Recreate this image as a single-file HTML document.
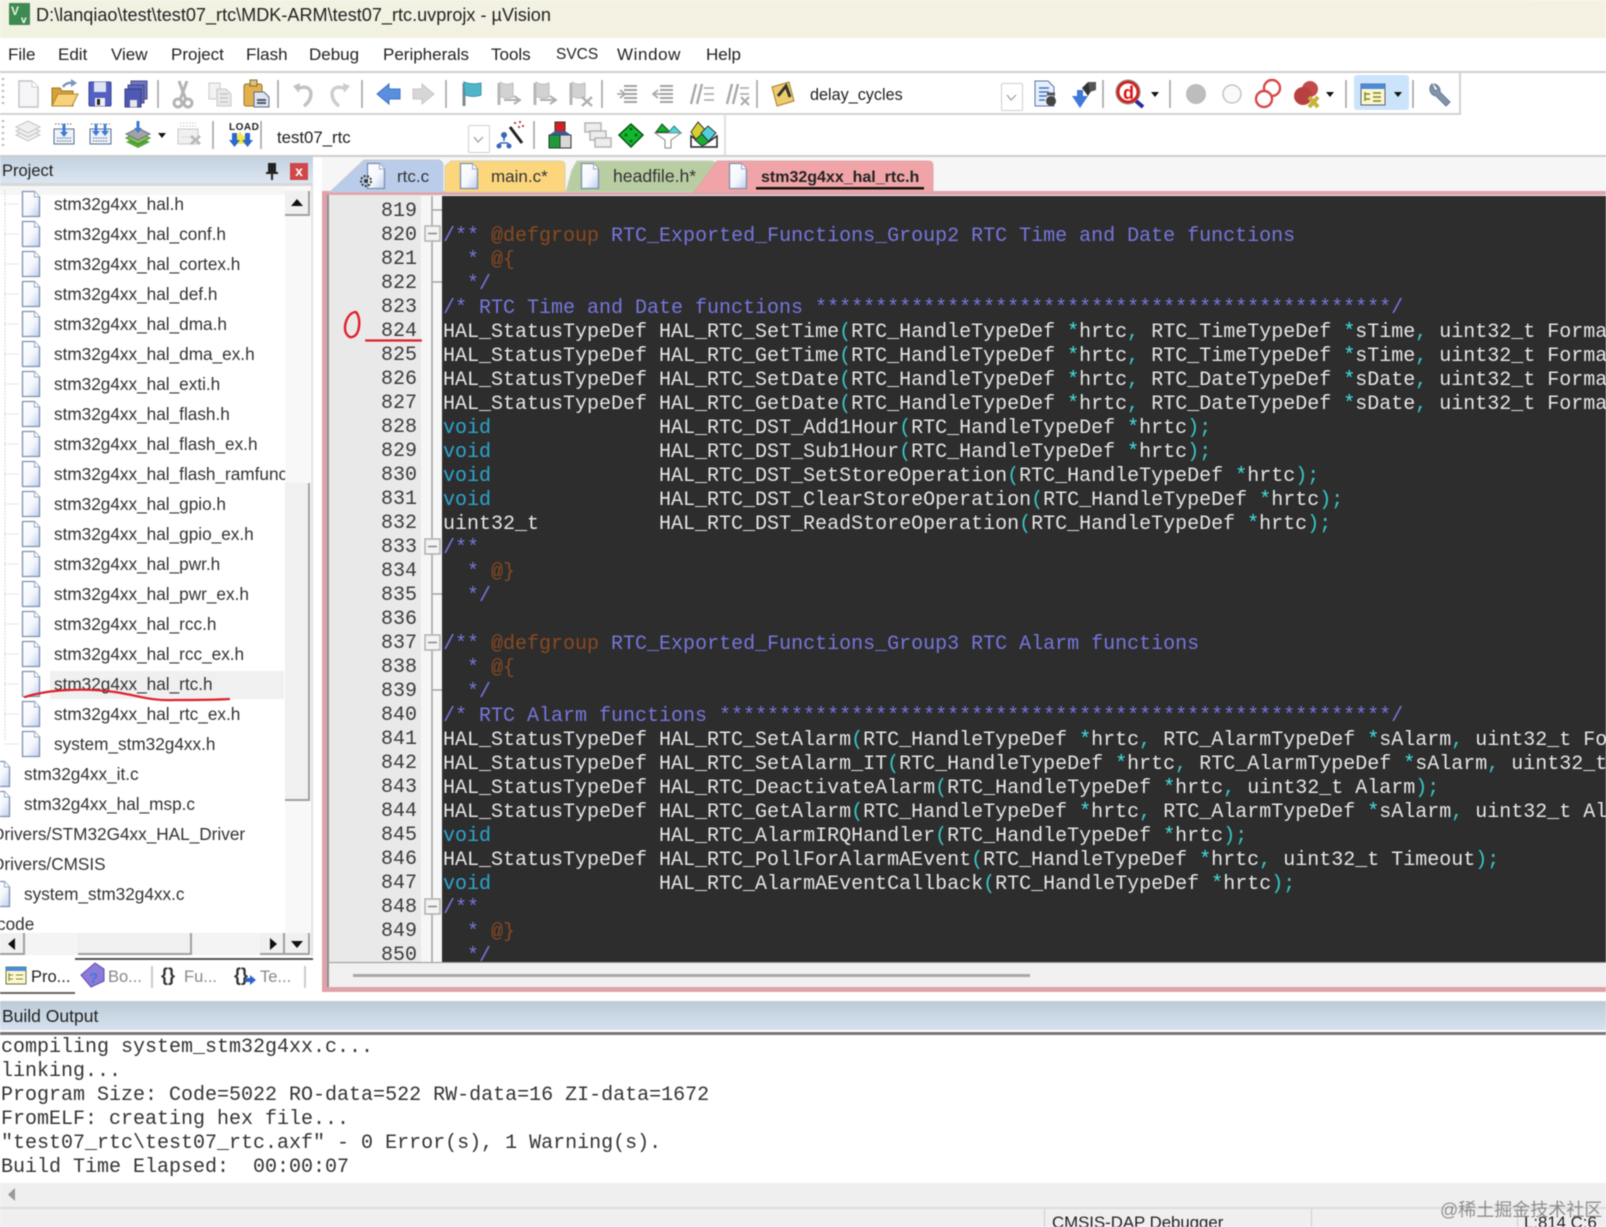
<!DOCTYPE html>
<html><head><meta charset="utf-8"><title>µVision</title>
<style>
html,body{margin:0;padding:0;width:1606px;height:1227px;overflow:hidden;background:#fff}
#p{position:relative;width:1606px;height:1227px;overflow:hidden;font-family:"Liberation Sans","Noto Sans CJK SC",sans-serif;color:#222;background:#fff;filter:blur(.4px)}
.a{position:absolute}
.t{position:absolute;white-space:nowrap;font-size:17px;line-height:22px}
.m{top:44px;color:#222}
.f{position:absolute;white-space:nowrap;font-size:17.2px;line-height:22px;color:#333}
pre{position:absolute;margin:0;font-family:"Liberation Mono",monospace;white-space:pre}
.c{color:#7676dc}.d{color:#8a4a20}.k{color:#2ba6cf}.o{color:#38c8c8}.s{color:#45e0e0}
.btn{position:absolute;background:#f0f0f0;border-right:2px solid #a0a0a0;border-bottom:2px solid #a0a0a0;box-sizing:border-box}
</style></head><body><div id="p">

<!-- title -->
<div class="a" style="left:0;top:0;width:1606px;height:38px;background:linear-gradient(90deg,#f1f2e2,#f5f1e2)"></div>
<div class="t" style="left:36px;top:4px;font-size:18.1px;color:#222">D:\lanqiao\test\test07_rtc\MDK-ARM\test07_rtc.uvprojx - µVision</div>

<!-- menu -->
<div class="t m" style="left:8px">File</div>
<div class="t m" style="left:58px">Edit</div>
<div class="t m" style="left:111px">View</div>
<div class="t m" style="left:171px">Project</div>
<div class="t m" style="left:246px">Flash</div>
<div class="t m" style="left:309px">Debug</div>
<div class="t m" style="left:383px">Peripherals</div>
<div class="t m" style="left:491px">Tools</div>
<div class="t m" style="left:556px;font-size:15.500px">SVCS</div>
<div class="t m" style="left:617px;letter-spacing:.6px">Window</div>
<div class="t m" style="left:706px">Help</div>
<div class="a" style="left:0;top:71px;width:1606px;height:2px;background:#cfcfcf"></div>

<!-- toolbars frame -->
<div class="a" style="left:0;top:113px;width:1460px;height:2px;background:#d2d2d2"></div>
<div class="a" style="left:1459px;top:72px;width:2px;height:43px;background:#d2d2d2"></div>
<div class="a" style="left:724px;top:114px;width:2px;height:42px;background:#e0e0e0"></div>
<div class="a" style="left:0;top:155px;width:1606px;height:2px;background:#cdcdcd"></div>
<div class="a" style="left:1354px;top:75px;width:55px;height:35px;background:#cce4fb;border-radius:3px"></div>
<div class="t" style="left:810px;top:84px;font-size:16.2px">delay_cycles</div>
<div class="t" style="left:277px;top:127px;font-size:16.8px">test07_rtc</div>
<div class="a" style="left:1001px;top:83px;width:20px;height:26px;border:1px solid #cfcfcf;background:#fff;border-radius:2px"></div>
<div class="a" style="left:468px;top:125px;width:20px;height:26px;border:1px solid #cfcfcf;background:#fff;border-radius:2px"></div>

<!-- tab strip -->
<div class="a" style="left:0;top:157px;width:1606px;height:38px;background:#f6f6f6"></div>
<div class="a" style="left:313px;top:157px;width:9px;height:850px;background:#fff"></div>

<!-- project panel -->
<div class="a" style="left:0;top:157px;width:313px;height:26px;background:linear-gradient(#c4d2e0,#dbe6f1)"></div>
<div class="a" style="left:0;top:183px;width:313px;height:3px;background:#d8d8d8"></div>
<div class="t" style="left:2px;top:160px;font-size:16.500px">Project</div>
<div class="a" style="left:290px;top:163px;width:18px;height:17px;background:#d0474a;color:#fff;font:bold 14px/17px 'Liberation Sans',sans-serif;text-align:center">x</div>
<div class="a" style="left:311px;top:186px;width:2px;height:770px;background:#e2e2e2"></div>

<div class="a" style="left:50px;top:671px;width:234px;height:28px;background:#f0f0f0"></div>
<div class="f" style="left:54px;top:193px">stm32g4xx_hal.h</div>
<div class="f" style="left:54px;top:223px">stm32g4xx_hal_conf.h</div>
<div class="f" style="left:54px;top:253px">stm32g4xx_hal_cortex.h</div>
<div class="f" style="left:54px;top:283px">stm32g4xx_hal_def.h</div>
<div class="f" style="left:54px;top:313px">stm32g4xx_hal_dma.h</div>
<div class="f" style="left:54px;top:343px">stm32g4xx_hal_dma_ex.h</div>
<div class="f" style="left:54px;top:373px">stm32g4xx_hal_exti.h</div>
<div class="f" style="left:54px;top:403px">stm32g4xx_hal_flash.h</div>
<div class="f" style="left:54px;top:433px">stm32g4xx_hal_flash_ex.h</div>
<div class="a" style="left:54px;top:463px;width:231px;height:30px;overflow:hidden"><div class="f" style="left:0;top:0">stm32g4xx_hal_flash_ramfunc.h</div></div>
<div class="f" style="left:54px;top:493px">stm32g4xx_hal_gpio.h</div>
<div class="f" style="left:54px;top:523px">stm32g4xx_hal_gpio_ex.h</div>
<div class="f" style="left:54px;top:553px">stm32g4xx_hal_pwr.h</div>
<div class="f" style="left:54px;top:583px">stm32g4xx_hal_pwr_ex.h</div>
<div class="f" style="left:54px;top:613px">stm32g4xx_hal_rcc.h</div>
<div class="f" style="left:54px;top:643px">stm32g4xx_hal_rcc_ex.h</div>
<div class="f" style="left:54px;top:673px">stm32g4xx_hal_rtc.h</div>
<div class="f" style="left:54px;top:703px">stm32g4xx_hal_rtc_ex.h</div>
<div class="f" style="left:54px;top:733px">system_stm32g4xx.h</div>
<div class="f" style="left:24px;top:763px">stm32g4xx_it.c</div>
<div class="f" style="left:24px;top:793px">stm32g4xx_hal_msp.c</div>
<div class="f" style="left:-8px;top:823px">Drivers/STM32G4xx_HAL_Driver</div>
<div class="f" style="left:-8px;top:853px">Drivers/CMSIS</div>
<div class="f" style="left:24px;top:883px">system_stm32g4xx.c</div>
<div class="f" style="left:-3px;top:913px">code</div>

<!-- project scrollbars -->
<div class="a" style="left:285px;top:186px;width:25px;height:747px;background:#f8f8f8"></div>
<div class="btn" style="left:285px;top:191px;width:25px;height:25px"></div>
<div class="btn" style="left:285px;top:483px;width:25px;height:318px"></div>
<div class="a" style="left:0;top:933px;width:310px;height:22px;background:#f4f4f4"></div>
<div class="btn" style="left:0;top:933px;width:25px;height:22px"></div>
<div class="btn" style="left:78px;top:933px;width:114px;height:22px"></div>
<div class="btn" style="left:260px;top:933px;width:25px;height:22px"></div>
<div class="btn" style="left:285px;top:933px;width:25px;height:22px"></div>
<div class="a" style="left:75px;top:958px;width:238px;height:2px;background:#555"></div>
<div class="a" style="left:0;top:992px;width:75px;height:2px;background:#666"></div>
<div class="t" style="left:31px;top:966px;font-size:16.500px">Pro...</div>
<div class="t" style="left:108px;top:966px;font-size:16.500px;color:#888">Bo...</div>
<div class="t" style="left:161px;top:964px;font-size:18px;font-weight:bold;color:#333">{}</div>
<div class="t" style="left:184px;top:966px;font-size:16.500px;color:#888">Fu...</div>
<div class="t" style="left:234px;top:964px;font-size:18px;font-weight:bold;color:#333">{}</div>
<div class="t" style="left:260px;top:966px;font-size:16.500px;color:#888">Te...</div>
<div class="a" style="left:151px;top:966px;width:2px;height:22px;background:#ccc"></div>
<div class="a" style="left:304px;top:966px;width:2px;height:22px;background:#ccc"></div>

<!-- editor -->
<div class="a" style="left:322px;top:191px;width:1284px;height:801px;background:#e0a2aa"></div>
<div class="a" style="left:327px;top:195px;width:1279px;height:792px;background:#f0f0f0"></div>
<div class="a" style="left:327px;top:195px;width:2px;height:792px;background:#8f8f8f"></div>
<div class="a" style="left:329px;top:196px;width:92px;height:766px;background:#e9e9e9"></div>
<div class="a" style="left:421px;top:196px;width:21px;height:766px;background:#f6f6f6"></div>
<div class="a" style="left:442px;top:196px;width:1164px;height:766px;background:#2d2d2d;overflow:hidden">
<pre style="left:1px;top:5px;font-size:20px;line-height:24px;color:#e6e6e6">

<span class="c">/** </span><span class="d">@defgroup</span><span class="c"> RTC_Exported_Functions_Group2 RTC Time and Date functions</span>
<span class="c">  * </span><span class="d">@{</span>
<span class="c">  */</span>
<span class="c">/* RTC Time and Date functions ************************************************/</span>
HAL_StatusTypeDef HAL_RTC_SetTime<span class="o">(</span>RTC_HandleTypeDef <span class="s">*</span>hrtc<span class="o">,</span> RTC_TimeTypeDef <span class="s">*</span>sTime<span class="o">,</span> uint32_t Format<span class="o">);</span>
HAL_StatusTypeDef HAL_RTC_GetTime<span class="o">(</span>RTC_HandleTypeDef <span class="s">*</span>hrtc<span class="o">,</span> RTC_TimeTypeDef <span class="s">*</span>sTime<span class="o">,</span> uint32_t Format<span class="o">);</span>
HAL_StatusTypeDef HAL_RTC_SetDate<span class="o">(</span>RTC_HandleTypeDef <span class="s">*</span>hrtc<span class="o">,</span> RTC_DateTypeDef <span class="s">*</span>sDate<span class="o">,</span> uint32_t Format<span class="o">);</span>
HAL_StatusTypeDef HAL_RTC_GetDate<span class="o">(</span>RTC_HandleTypeDef <span class="s">*</span>hrtc<span class="o">,</span> RTC_DateTypeDef <span class="s">*</span>sDate<span class="o">,</span> uint32_t Format<span class="o">);</span>
<span class="k">void</span>              HAL_RTC_DST_Add1Hour<span class="o">(</span>RTC_HandleTypeDef <span class="s">*</span>hrtc<span class="o">);</span>
<span class="k">void</span>              HAL_RTC_DST_Sub1Hour<span class="o">(</span>RTC_HandleTypeDef <span class="s">*</span>hrtc<span class="o">);</span>
<span class="k">void</span>              HAL_RTC_DST_SetStoreOperation<span class="o">(</span>RTC_HandleTypeDef <span class="s">*</span>hrtc<span class="o">);</span>
<span class="k">void</span>              HAL_RTC_DST_ClearStoreOperation<span class="o">(</span>RTC_HandleTypeDef <span class="s">*</span>hrtc<span class="o">);</span>
uint32_t          HAL_RTC_DST_ReadStoreOperation<span class="o">(</span>RTC_HandleTypeDef <span class="s">*</span>hrtc<span class="o">);</span>
<span class="c">/**</span>
<span class="c">  * </span><span class="d">@}</span>
<span class="c">  */</span>

<span class="c">/** </span><span class="d">@defgroup</span><span class="c"> RTC_Exported_Functions_Group3 RTC Alarm functions</span>
<span class="c">  * </span><span class="d">@{</span>
<span class="c">  */</span>
<span class="c">/* RTC Alarm functions ********************************************************/</span>
HAL_StatusTypeDef HAL_RTC_SetAlarm<span class="o">(</span>RTC_HandleTypeDef <span class="s">*</span>hrtc<span class="o">,</span> RTC_AlarmTypeDef <span class="s">*</span>sAlarm<span class="o">,</span> uint32_t Format<span class="o">);</span>
HAL_StatusTypeDef HAL_RTC_SetAlarm_IT<span class="o">(</span>RTC_HandleTypeDef <span class="s">*</span>hrtc<span class="o">,</span> RTC_AlarmTypeDef <span class="s">*</span>sAlarm<span class="o">,</span> uint32_t Format<span class="o">);</span>
HAL_StatusTypeDef HAL_RTC_DeactivateAlarm<span class="o">(</span>RTC_HandleTypeDef <span class="s">*</span>hrtc<span class="o">,</span> uint32_t Alarm<span class="o">);</span>
HAL_StatusTypeDef HAL_RTC_GetAlarm<span class="o">(</span>RTC_HandleTypeDef <span class="s">*</span>hrtc<span class="o">,</span> RTC_AlarmTypeDef <span class="s">*</span>sAlarm<span class="o">,</span> uint32_t Alarm<span class="o">,</span> uint32_t Format<span class="o">);</span>
<span class="k">void</span>              HAL_RTC_AlarmIRQHandler<span class="o">(</span>RTC_HandleTypeDef <span class="s">*</span>hrtc<span class="o">);</span>
HAL_StatusTypeDef HAL_RTC_PollForAlarmAEvent<span class="o">(</span>RTC_HandleTypeDef <span class="s">*</span>hrtc<span class="o">,</span> uint32_t Timeout<span class="o">);</span>
<span class="k">void</span>              HAL_RTC_AlarmAEventCallback<span class="o">(</span>RTC_HandleTypeDef <span class="s">*</span>hrtc<span class="o">);</span>
<span class="c">/**</span>
<span class="c">  * </span><span class="d">@}</span>
<span class="c">  */</span></pre>
</div>
<pre style="left:381px;top:200px;font-size:20px;line-height:24px;color:#3a3a3a;height:762px;overflow:hidden">819
820
821
822
823
824
825
826
827
828
829
830
831
832
833
834
835
836
837
838
839
840
841
842
843
844
845
846
847
848
849
850</pre>
<div class="a" style="left:353px;top:974px;width:677px;height:3px;background:#a8a8a8"></div>
<div class="a" style="left:327px;top:962px;width:1279px;height:1px;background:#999"></div>

<!-- tabs + all icons -->
<svg class="a" style="left:0;top:0" width="1606" height="1227" viewBox="0 0 1606 1227" font-family="Liberation Sans, sans-serif">
<defs>
<linearGradient id="dg" x1="0" y1="0" x2="1" y2="1"><stop offset="0" stop-color="#fff"/><stop offset=".55" stop-color="#f4f7fd"/><stop offset="1" stop-color="#bdcdeb"/></linearGradient>
<g id="doc"><path d="M-8.500-12.500H3.500L8.500-7V12.500H-8.500Z" fill="url(#dg)" stroke="#7d8fb0" stroke-width="1.3"/><path d="M3.500-12.500V-7H8.500" fill="#fff" stroke="#9aa9c4"/></g>
<g id="ar"><path d="M-4-2H4L0 3Z" fill="#111"/></g>
<g id="gflag"><path d="M-9-11V11" stroke="#b5b5b5" stroke-width="3"/><path d="M-8-12Q-2-8 5-11V3Q-2 6-8 2Z" fill="#d2d2d2" stroke="#bcbcbc"/></g>
<g id="il"><path d="M-2-8H11M-2-4H11M-2 0H11M-2 4H11M-2 8H11" stroke="#a2a2a2" stroke-width="2"/></g>
</defs>

<!-- title icon -->
<rect x="9" y="3" width="21" height="22" rx="1" fill="#3f8a52"/>
<text x="11" y="15" font-size="12" font-weight="bold" fill="#e8f4d8">V</text>
<text x="21" y="23" font-size="10" font-weight="bold" fill="#fff">v</text>

<!-- toolbar grips -->
<path d="M3 78V108M3 120V150" stroke="#bbb" stroke-width="2.500" stroke-dasharray="2 4"/>

<!-- separators -->
<path d="M158 80V108M278 80V108M362 80V108M446 80V108M602 80V108M757 80V108M1103 80V108M1170 80V108M1346 80V108M1413 80V108M213 121V149M261 121V149M534 121V149" stroke="#a6a6a6" stroke-width="1.600"/>

<!-- row 1 -->
<g transform="translate(28,94)"><path d="M-9-13H4L10-7V13H-9Z" fill="#f6f6f8" stroke="#c2c2c8" stroke-width="1.400"/><path d="M4-13V-7H10" fill="#fff" stroke="#cfcfd4"/></g>
<g transform="translate(64,94)"><path d="M-12-6H-4L-2-3H9V12H-12Z" fill="#d7a03a" stroke="#9a7423"/><path d="M-12 12L-6 0H14L8 12Z" fill="#f7d27a" stroke="#b08a2c"/><path d="M-1-7Q2-12 9-11" fill="none" stroke="#7a94bb" stroke-width="2.400"/><path d="M7-15L13-11L7-7Z" fill="#7a94bb"/></g>
<g transform="translate(100,94)"><rect x="-11" y="-12" width="22" height="24" rx="1" fill="#5360c2" stroke="#39408f"/><rect x="-6" y="-12" width="12" height="10" fill="#dfe4f5"/><rect x="-5" y="4" width="10" height="8" fill="#f0f0f0"/><rect x="-3" y="5" width="3" height="6" fill="#222"/></g>
<g transform="translate(136,94)"><rect x="-5" y="-13" width="16" height="18" fill="#6e76c6" stroke="#45497f"/><rect x="-8" y="-9" width="16" height="18" fill="#5c66bd" stroke="#45497f"/><rect x="-11" y="-5" width="16" height="18" fill="#4f59b4" stroke="#3a3f84"/><rect x="-6" y="6" width="7" height="7" fill="#e8e8e8"/></g>
<g transform="translate(183,94)" fill="none" stroke="#b4b4b4"><path d="M-4-13L3 6M4-13L-3 6" stroke-width="3"/><circle cx="-5" cy="9" r="4" stroke-width="3"/><circle cx="5" cy="9" r="4" stroke-width="3"/></g>
<g transform="translate(220,94)" stroke="#c9c9c9" fill="#f2f2f2"><path d="M-11-11H0V5H-11Z"/><path d="M-3-5H6L11 0V12H-3Z" fill="#e8e8e8"/><path d="M0 0H8M0 4H8M0 8H8" stroke="#bbb"/></g>
<g transform="translate(256,94)"><rect x="-12" y="-10" width="18" height="22" rx="2" fill="#e3b04f" stroke="#9c7426"/><rect x="-6" y="-14" width="7" height="6" fill="#d8c38a" stroke="#8a6a22"/><path d="M-2-2H8L13 3V13H-2Z" fill="#dfe4ee" stroke="#5d6a84"/><path d="M1 6H10M1 9H10" stroke="#4c5a72" stroke-width="2"/></g>
<g transform="translate(303,94)" fill="none" stroke="#c2c2c2" stroke-width="3.400"><path d="M-6-5Q6-10 8-1Q8 7 1 12"/><path d="M-10-8L-3-11L-4-1Z" fill="#c2c2c2" stroke="none"/></g>
<g transform="translate(340,94)" fill="none" stroke="#cdcdcd" stroke-width="3.400"><path d="M6-5Q-6-10-8-1Q-8 7-1 12"/><path d="M10-8L3-11L4-1Z" fill="#cdcdcd" stroke="none"/></g>
<path d="M377 94L389 84V89H400V99H389V104Z" fill="#5a8fe0" stroke="#3f74c4"/>
<path d="M434 94L422 84V89H413V99H422V104Z" fill="#d6d6d6" stroke="#c8c8c8"/>
<g transform="translate(472,94)"><path d="M-8-11V12" stroke="#788a92" stroke-width="3"/><path d="M-8-12Q-1-9 9-11V1Q1 4-7 1Z" fill="#4fb6c9" stroke="#3b98aa"/></g>
<use href="#gflag" x="508" y="94"/><path d="M504 100H519M514 96L520 100L514 104" fill="none" stroke="#b0b0b0" stroke-width="2"/>
<use href="#gflag" x="544" y="94"/><path d="M540 100H555M550 96L556 100L550 104" fill="none" stroke="#b0b0b0" stroke-width="2"/>
<use href="#gflag" x="580" y="94"/><path d="M582 97L592 106M592 97L582 106" stroke="#b0b0b0" stroke-width="2.400"/>
<use href="#il" x="626" y="94"/><path d="M617 94H624M620 90L625 94L620 98" fill="none" stroke="#a2a2a2" stroke-width="1.600"/>
<use href="#il" x="662" y="94"/><path d="M655 94H661M658 90L653 94L658 98" fill="none" stroke="#a2a2a2" stroke-width="1.600"/>
<g stroke="#a8a8a8" fill="none"><path d="M691 104L696 84M697 104L702 84" stroke-width="2.400"/><path d="M704 88H714M704 94H714M704 100H714" stroke-width="1.400"/><path d="M727 104L732 84M733 104L738 84" stroke-width="2.400"/><path d="M740 88H749M740 94H749" stroke-width="1.400"/><path d="M741 97L749 105M749 97L741 105" stroke-width="2"/></g>
<g transform="translate(783,94)"><path d="M-11-7L6-12L11 7L-6 12Z" fill="#f0cb6c" stroke="#a07e2a"/><path d="M-5 2L3-8L7 3" fill="none" stroke="#333" stroke-width="3"/></g>
<path d="M1007 95L1011 100L1016 95" fill="none" stroke="#999" stroke-width="1.200"/>
<path d="M474 137L478 142L483 137" fill="none" stroke="#999" stroke-width="1.200"/>
<g transform="translate(1047,94)"><path d="M-12-13H1L7-7V12H-12Z" fill="#e8eefb" stroke="#5577aa"/><path d="M-8-6H2M-8-2H2M-8 2H0M-8 6H-2" stroke="#3c76c4" stroke-width="1.400"/><circle cx="4" cy="7" r="5" fill="#444"/><path d="M0 0L8 0" stroke="#555" stroke-width="3"/></g>
<g transform="translate(1082,94)"><path d="M-8-2H-3V-8H3V-2H8L0 10Z" fill="#3f78d8" transform="translate(-2,4)"/><path d="M0-6L6-12L12-8L6 2Z" fill="#333"/><path d="M6-12L14-12L14-4L8-2Z" fill="#555"/></g>
<g transform="translate(1129,94)"><circle cx="-1" cy="-2" r="10" fill="#fff" stroke="#d02020" stroke-width="3"/><circle cx="-1" cy="-2" r="12" fill="none" stroke="#888" stroke-width="1"/><text x="-6" y="5" font-size="18" font-weight="bold" fill="#e01010">d</text><path d="M7 7L14 13" stroke="#2a2a98" stroke-width="4"/></g>
<use href="#ar" x="1155" y="94"/>
<circle cx="1196" cy="94" r="10" fill="#bdbdbd"/>
<circle cx="1232" cy="94" r="9" fill="#fafafa" stroke="#c4c4c4" stroke-width="1.500"/>
<g fill="none" stroke="#d8484a" stroke-width="2.400"><circle cx="1272" cy="88" r="8"/><circle cx="1264" cy="99" r="8" fill="#fff"/></g>
<g transform="translate(1308,94)"><circle cx="2" cy="-5" r="8" fill="#c44a4a"/><circle cx="-5" cy="2" r="9" fill="#b84040"/><path d="M1 3L10 13M10 3L1 13" stroke="#c7b23c" stroke-width="4"/></g>
<use href="#ar" x="1330" y="94"/>
<g transform="translate(1373,94)"><rect x="-12" y="-10" width="24" height="21" fill="#fff6cf" stroke="#555f76"/><rect x="-12" y="-10" width="24" height="5" fill="#4b8bdb"/><path d="M-8-2V7M-8 0H-3M-8 5H-3M0-1H8M0 3H8M0 7H8" stroke="#778a2a" stroke-width="1.400"/></g>
<use href="#ar" x="1398" y="94"/>
<path d="M1432 84A7 7 0 0 0 1436 96L1446 106L1450 102L1440 92A7 7 0 0 0 1434 84L1438 89L1435 91Z" fill="#8294ad" stroke="#6a7a92"/>

<!-- row 2 -->
<g fill="#f0f0f0" stroke="#c4c4c4"><path d="M28 129L40 135L28 141L16 135Z"/><path d="M28 125L40 131L28 137L16 131Z"/><path d="M28 121L40 127L28 133L16 127Z"/></g>
<g stroke="#5e6f8c"><rect x="54" y="129" width="20" height="15" fill="#eef2fa"/><path d="M57 141H71M57 138H71" stroke-dasharray="1.500 1"/><path d="M64 124V134" stroke="#3a7bd8" stroke-width="3"/><path d="M60 132H68L64 137Z" fill="#3a7bd8" stroke="none"/><path d="M55 124H73" stroke-dasharray="1.500 1.500"/></g>
<g stroke="#5e6f8c"><rect x="90" y="129" width="21" height="15" fill="#eef2fa"/><path d="M93 141H108M93 138H108" stroke-dasharray="1.500 1"/><path d="M96 124V133M105 124V133" stroke="#3a7bd8" stroke-width="2.600"/><path d="M92 131H100L96 136ZM101 131H109L105 136Z" fill="#3a7bd8" stroke="none"/><path d="M91 124H110" stroke-dasharray="1.500 1.500"/></g>
<g transform="translate(138,135)"><path d="M0 1L12 7L0 13L-12 7Z" fill="#58a43c"/><path d="M0-3L12 3L0 9L-12 3Z" fill="#7fc25a" stroke="#4a8a30"/><path d="M0-7L12-1L0 5L-12-1Z" fill="#a0a4a8" stroke="#707478"/><path d="M0-14V-6" stroke="#3a7bd8" stroke-width="3"/><path d="M-4-7H4L0-2Z" fill="#3a7bd8"/></g>
<use href="#ar" x="162" y="135"/>
<g stroke="#c8c8c8"><rect x="178" y="129" width="20" height="15" fill="#f0f0f0"/><path d="M180 123H196M180 126H196M182 137H192" stroke-dasharray="1.500 1.500"/><path d="M191 136L200 144M200 136L191 144" stroke="#b8b8b8" stroke-width="2.600"/></g>
<text x="229" y="130" font-size="10" font-weight="bold" letter-spacing=".5" fill="#222">LOAD</text>
<path d="M240 131L243 136L248 134L246 139L248 144H232L234 139L232 134L237 136Z" fill="#f3e84a"/>
<path d="M232 133H237V140H240L234.500 147L229 140H232ZM245 133H250V140H253L247.500 147L242 140H245Z" fill="#2c66d0"/>
<g transform="translate(512,135)"><path d="M-2-8L10 8" stroke="#222" stroke-width="3"/><path d="M-8 2V6M-12 8H-4M-12 8V12M-4 8V12" stroke="#3a66b8" stroke-width="1.600" fill="none"/><circle cx="-8" cy="0" r="3" fill="#3a66b8"/><circle cx="-13" cy="11" r="2.500" fill="#3a66b8"/><circle cx="-3" cy="11" r="2.500" fill="#3a66b8"/><path d="M2-12h2M7-13h2M10-9h2M6-8h2" stroke="#c04040" stroke-width="2"/></g>
<g transform="translate(560,135)"><rect x="-5" y="-13" width="10" height="12" fill="#d62020" stroke="#333"/><rect x="-11" y="0" width="11" height="13" fill="#1f9a3a" stroke="#333"/><rect x="0" y="0" width="11" height="13" fill="#d8d8d8" stroke="#333"/><path d="M-11 0L-5-4H5L11 0" fill="#3c5a94"/></g>
<g fill="#ededed" stroke="#b4b4b4" stroke-width="1.500"><rect x="585" y="123" width="16" height="9"/><rect x="590" y="131" width="16" height="9"/><rect x="595" y="138" width="16" height="9"/></g>
<path d="M631 124L643 135L631 147L619 135Z" fill="#12b82a" stroke="#0a4f14" stroke-width="1.500"/><g fill="#063"><circle cx="631" cy="129" r="1.500"/><circle cx="626" cy="135" r="1.500"/><circle cx="636" cy="135" r="1.500"/><circle cx="631" cy="141" r="1.500"/></g>
<g transform="translate(668,135)"><path d="M-6-11L2-3H-12Z" fill="#14b030" stroke="#0a4f14"/><path d="M6-9L13-2H0Z" fill="#4fd6d8" stroke="#2a7f80"/><path d="M-13-2H13L3 5V13H-3V5Z" fill="#fff" stroke="#888"/></g>
<g transform="translate(704,135)"><path d="M-6-13L3-3L-6 8L-13-3Z" fill="#d8d030" stroke="#333"/><path d="M4-9L12-2L4 7L-3-2Z" fill="#50d0d8" stroke="#333"/><path d="M-13 1V12H13V1L0 10Z" fill="#fff" stroke="#222" stroke-width="1.500"/><path d="M-2-1L5 7L-2 11L-9 5Z" fill="#18b030" stroke="#333"/></g>

<!-- tabs -->
<path d="M330 192L364 160H437Q443 160 443 166V192Z" fill="#b9cdeb" stroke="#c8c8d0"/>
<path d="M445 192V166L451 161H560Q565 161 565 166V192Z" fill="#fcd67c" stroke="#d8d0b0"/>
<path d="M566 192L572 170L577 161H710Q716 161 716 166L700 192Z" fill="#b9cda2" stroke="#c9cfc0"/>
<path d="M694 192L717 161H928Q933 161 933 166V192Z" fill="#f0a4a7" stroke="#d9a8aa"/>
<text x="397" y="182" font-size="17" fill="#333">rtc.c</text>
<text x="491" y="182" font-size="17" fill="#333">main.c*</text>
<text x="613" y="182" font-size="17.600" fill="#333">headfile.h*</text>
<text x="761" y="182" font-size="16" font-weight="bold" fill="#222">stm32g4xx_hal_rtc.h</text>
<rect x="756" y="187" width="168" height="2.500" fill="#111"/>
<use href="#doc" x="376" y="176"/>
<g fill="#333"><circle cx="366" cy="181" r="5" fill="none" stroke="#333" stroke-width="2" stroke-dasharray="2 1.500"/><circle cx="366" cy="181" r="2"/></g>
<use href="#doc" x="469" y="176"/>
<use href="#doc" x="590" y="176"/>
<use href="#doc" x="738" y="176"/>

<!-- pin -->
<path d="M268 163H276V172H278V174H273V180H271V174H266V172H268Z" fill="#222"/>
<!-- scroll arrows -->
<path d="M297 199L303 206H291Z M15 938V950L8 944Z" fill="#111"/>
<path d="M270 938L277 944L270 950Z M291 941H303L297 948Z" fill="#111"/>
<path d="M15 1188V1201L8 1194.500Z" fill="#999"/>

<!-- tree lines -->
<path d="M5 190V742" stroke="#bbb" stroke-dasharray="1 2"/>
<path d="M5 204H20M5 234H20M5 264H20M5 294H20M5 324H20M5 354H20M5 384H20M5 414H20M5 444H20M5 474H20M5 504H20M5 534H20M5 564H20M5 594H20M5 624H20M5 654H20M5 684H20M5 714H20M5 744H20" stroke="#bbb" stroke-dasharray="1 2"/>
<use href="#doc" x="31" y="204"/><use href="#doc" x="31" y="234"/><use href="#doc" x="31" y="264"/><use href="#doc" x="31" y="294"/><use href="#doc" x="31" y="324"/><use href="#doc" x="31" y="354"/><use href="#doc" x="31" y="384"/><use href="#doc" x="31" y="414"/><use href="#doc" x="31" y="444"/><use href="#doc" x="31" y="474"/><use href="#doc" x="31" y="504"/><use href="#doc" x="31" y="534"/><use href="#doc" x="31" y="564"/><use href="#doc" x="31" y="594"/><use href="#doc" x="31" y="624"/><use href="#doc" x="31" y="654"/><use href="#doc" x="31" y="684"/><use href="#doc" x="31" y="714"/><use href="#doc" x="31" y="744"/>
<use href="#doc" x="1" y="774"/><use href="#doc" x="1" y="804"/><use href="#doc" x="1" y="894"/>

<!-- bottom tab icons -->
<g transform="translate(16,975)"><rect x="-10" y="-8" width="20" height="17" fill="#fff6cf" stroke="#5c7a4a"/><rect x="-10" y="-8" width="20" height="4" fill="#4b8bdb"/><path d="M-7-2V6M-7 0H-3M-7 4H-3M0 0H7M0 4H7" stroke="#778a2a"/></g>
<g transform="translate(93,975)"><path d="M-12 0L2-12L11-6V6L-2 12Z" fill="#8d7ad8" stroke="#5d4eb0"/><text x="-4" y="8" font-size="15" font-weight="bold" fill="#3a7bd8">?</text></g>
<path d="M245 978H250V975L256 980L250 985V982H245Z" fill="#2f63cc"/>

<!-- fold -->
<path d="M432 196V962" stroke="#a4a4a4" stroke-width="1.500"/>
<path d="M432 210H442M432 282H442M432 594H442M432 690H442" stroke="#a4a4a4" stroke-width="1.500"/>
<g fill="#f2f2f2" stroke="#b0b0b0" stroke-width="1.500"><rect x="425" y="226" width="15" height="15"/><rect x="425" y="539" width="15" height="15"/><rect x="425" y="635" width="15" height="15"/><rect x="425" y="899" width="15" height="15"/></g>
<path d="M428 233.500H437M428 546.500H437M428 642.500H437M428 906.500H437" stroke="#888" stroke-width="1.500"/>

<!-- red annotation -->
<g fill="none" stroke="#e0202a" stroke-linecap="round">
<path d="M355 312C349 313 345 321 345 328C345 334 349 338 352 337C358 336 360 327 359 319C358 315 357 312 355 312Z" stroke-width="2.400"/>
<path d="M366 340.500H421" stroke-width="2.200"/>
<path d="M25 697C50 689 85 688 115 692C140 696 150 701 175 700C195 700 215 700 229 699" stroke-width="2.200"/>
</g>
</svg>

<!-- build output -->
<div class="a" style="left:0;top:1001px;width:1606px;height:29px;background:linear-gradient(#bccbd8,#d6e2ee)"></div>
<div class="a" style="left:0;top:1032px;width:1606px;height:3px;background:#777"></div>
<div class="t" style="left:2px;top:1005px;font-size:17.500px">Build Output</div>
<pre style="left:1px;top:1036px;font-size:20px;line-height:23.9px;color:#333">compiling system_stm32g4xx.c...
linking...
Program Size: Code=5022 RO-data=522 RW-data=16 ZI-data=1672
FromELF: creating hex file...
"test07_rtc\test07_rtc.axf" - 0 Error(s), 1 Warning(s).
Build Time Elapsed:  00:00:07</pre>
<div class="a" style="left:0;top:1183px;width:1606px;height:44px;background:#efefef"></div>
<div class="a" style="left:0;top:1207px;width:1606px;height:2px;background:#dcdcdc"></div>
<svg class="a" style="left:0;top:1183px" width="30" height="24"><path d="M15 5V18L8 11.500Z" fill="#999"/></svg>
<div class="a" style="left:1044px;top:1209px;width:1px;height:18px;background:#ccc"></div>
<div class="a" style="left:1311px;top:1209px;width:1px;height:18px;background:#ccc"></div>
<div class="a" style="left:1517px;top:1209px;width:1px;height:18px;background:#ccc"></div>
<div class="t" style="left:1052px;top:1212px;font-size:16.800px">CMSIS-DAP Debugger</div>
<div class="t" style="left:1524px;top:1212px;font-size:16.800px">L:814 C:6</div>
<div class="t" style="left:1440px;top:1199px;font-size:18px;color:rgba(110,110,110,.75)">@稀土掘金技术社区</div>
</div></body></html>
